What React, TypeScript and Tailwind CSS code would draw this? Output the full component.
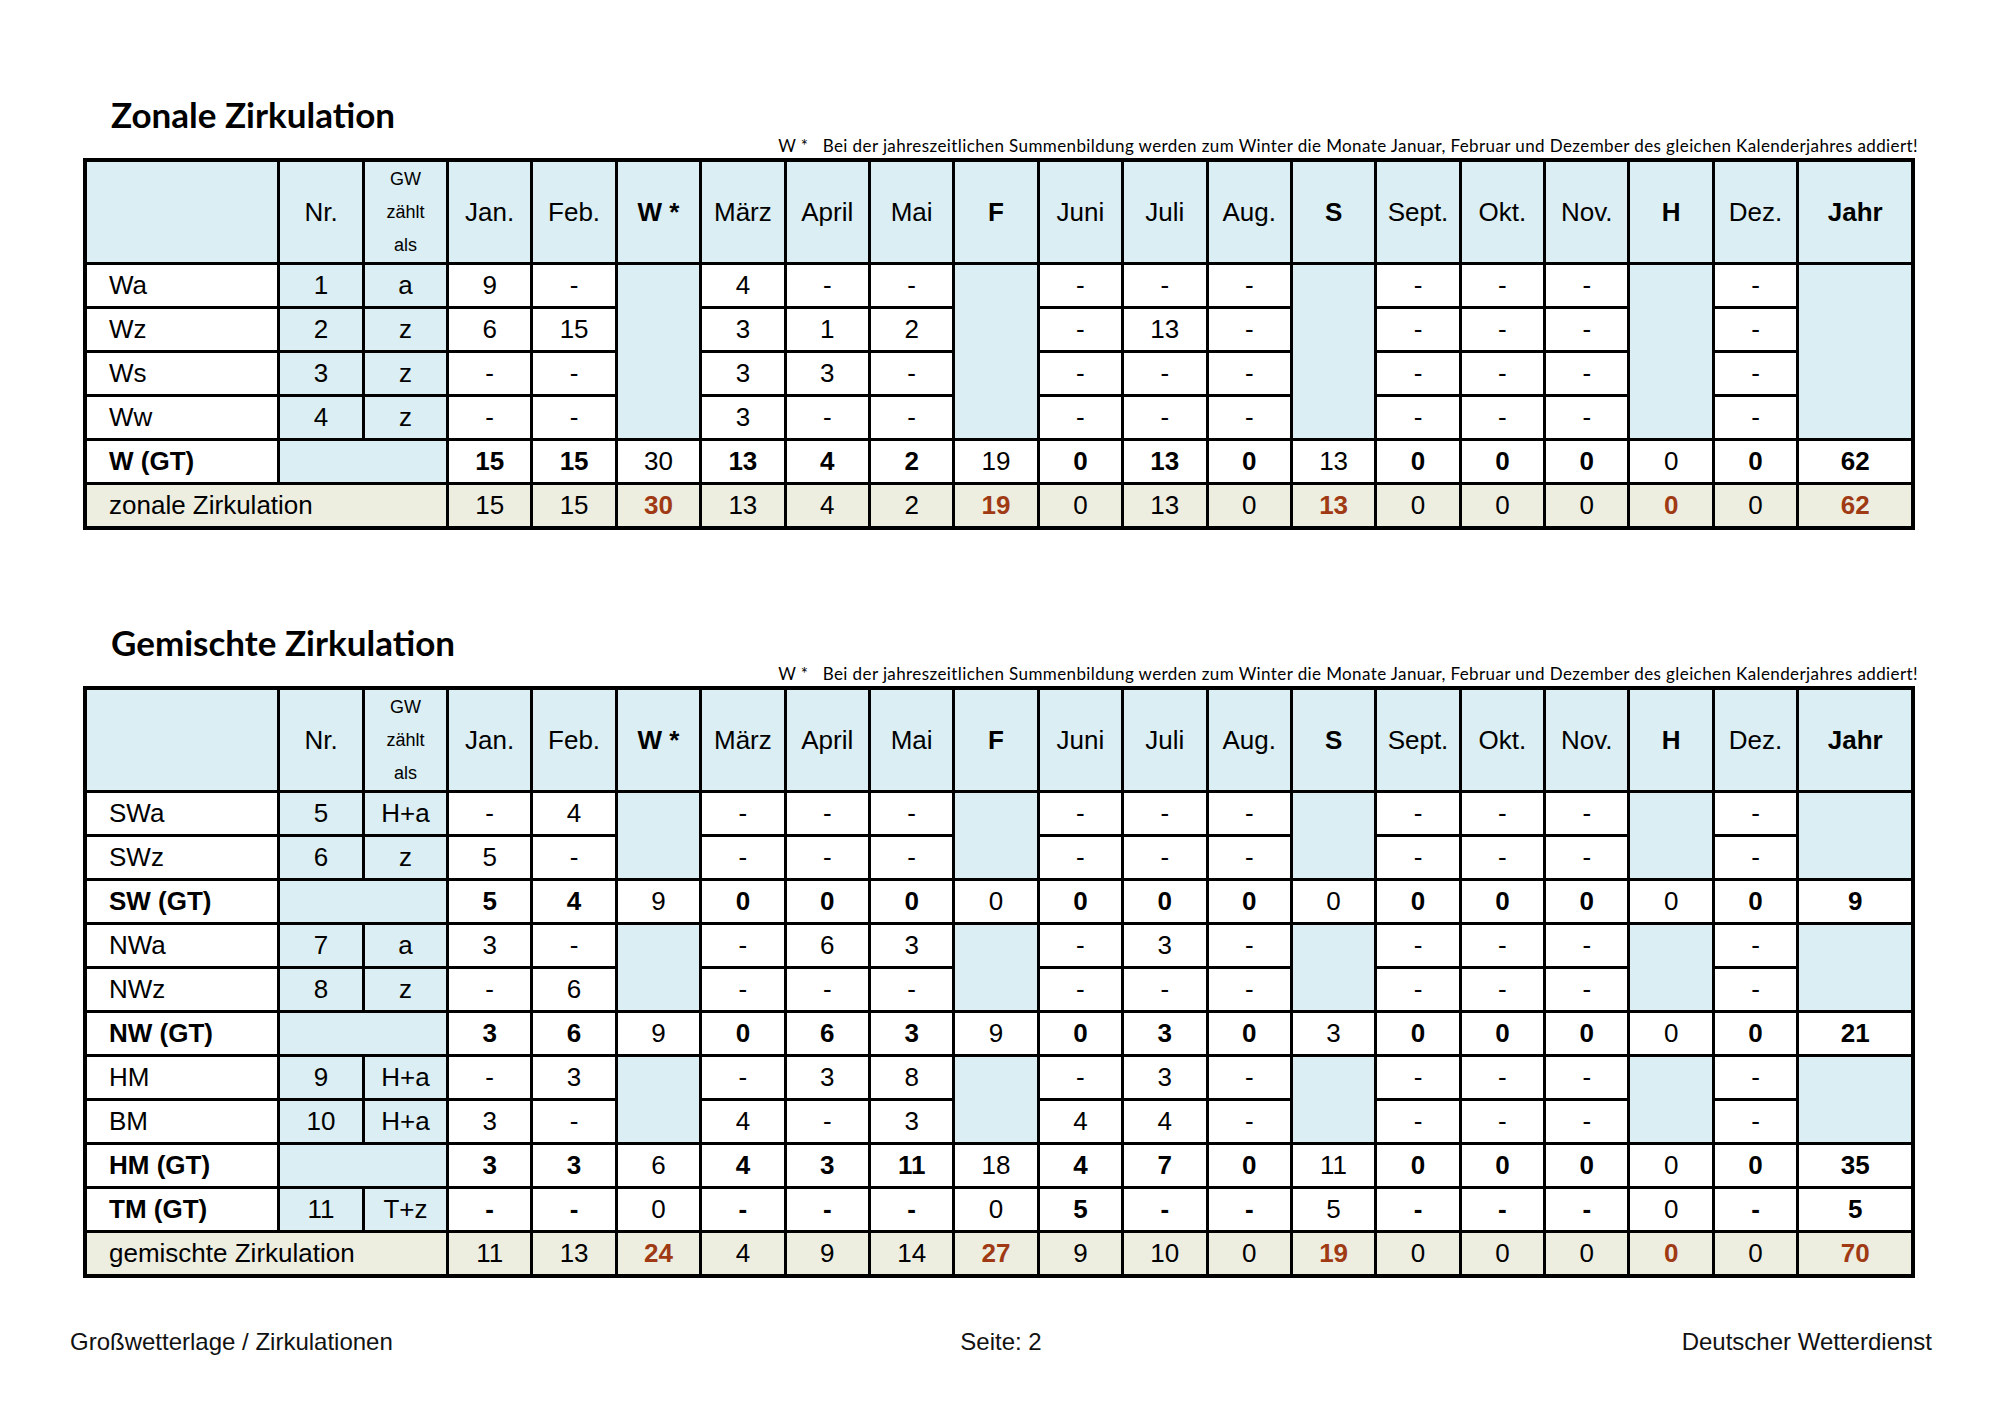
const COLS = ["Jan.", "Feb.", "W *", "März", "April", "Mai", "F", "Juni", "Juli", "Aug.", "S", "Sept.", "Okt.", "Nov.", "H", "Dez.", "Jahr"];
const SEASON = new Set([2, 6, 10, 14, 16]);

type Row =
  | { kind: "type"; label: string; nr: string; gw: string; months: string[]; span?: number }
  | { kind: "sum"; label: string; vals: string[]; nr?: string; gw?: string }
  | { kind: "total"; label: string; vals: string[] };

const ZONAL: Row[] = [
  { kind: "type", label: "Wa", nr: "1", gw: "a", span: 4, months: ["9", "-", "4", "-", "-", "-", "-", "-", "-", "-", "-", "-"] },
  { kind: "type", label: "Wz", nr: "2", gw: "z", months: ["6", "15", "3", "1", "2", "-", "13", "-", "-", "-", "-", "-"] },
  { kind: "type", label: "Ws", nr: "3", gw: "z", months: ["-", "-", "3", "3", "-", "-", "-", "-", "-", "-", "-", "-"] },
  { kind: "type", label: "Ww", nr: "4", gw: "z", months: ["-", "-", "3", "-", "-", "-", "-", "-", "-", "-", "-", "-"] },
  { kind: "sum", label: "W (GT)", vals: ["15", "15", "30", "13", "4", "2", "19", "0", "13", "0", "13", "0", "0", "0", "0", "0", "62"] },
  { kind: "total", label: "zonale Zirkulation", vals: ["15", "15", "30", "13", "4", "2", "19", "0", "13", "0", "13", "0", "0", "0", "0", "0", "62"] },
];

const MIXED: Row[] = [
  { kind: "type", label: "SWa", nr: "5", gw: "H+a", span: 2, months: ["-", "4", "-", "-", "-", "-", "-", "-", "-", "-", "-", "-"] },
  { kind: "type", label: "SWz", nr: "6", gw: "z", months: ["5", "-", "-", "-", "-", "-", "-", "-", "-", "-", "-", "-"] },
  { kind: "sum", label: "SW (GT)", vals: ["5", "4", "9", "0", "0", "0", "0", "0", "0", "0", "0", "0", "0", "0", "0", "0", "9"] },
  { kind: "type", label: "NWa", nr: "7", gw: "a", span: 2, months: ["3", "-", "-", "6", "3", "-", "3", "-", "-", "-", "-", "-"] },
  { kind: "type", label: "NWz", nr: "8", gw: "z", months: ["-", "6", "-", "-", "-", "-", "-", "-", "-", "-", "-", "-"] },
  { kind: "sum", label: "NW (GT)", vals: ["3", "6", "9", "0", "6", "3", "9", "0", "3", "0", "3", "0", "0", "0", "0", "0", "21"] },
  { kind: "type", label: "HM", nr: "9", gw: "H+a", span: 2, months: ["-", "3", "-", "3", "8", "-", "3", "-", "-", "-", "-", "-"] },
  { kind: "type", label: "BM", nr: "10", gw: "H+a", months: ["3", "-", "4", "-", "3", "4", "4", "-", "-", "-", "-", "-"] },
  { kind: "sum", label: "HM (GT)", vals: ["3", "3", "6", "4", "3", "11", "18", "4", "7", "0", "11", "0", "0", "0", "0", "0", "35"] },
  { kind: "sum", label: "TM (GT)", nr: "11", gw: "T+z", vals: ["-", "-", "0", "-", "-", "-", "0", "5", "-", "-", "5", "-", "-", "-", "0", "-", "5"] },
  { kind: "total", label: "gemischte Zirkulation", vals: ["11", "13", "24", "4", "9", "14", "27", "9", "10", "0", "19", "0", "0", "0", "0", "0", "70"] },
];

const BLUE = "bg-[#daeef3]";
const BEIGE = "bg-[#edeee0]";

function Cell({ children, className = "" }: { children?: React.ReactNode; className?: string }) {
  return <div className={`flex items-center justify-center ${className}`}>{children}</div>;
}

function TableRow({ row }: { row: Row }) {
  if (row.kind === "type") {
    let m = 0;
    return (
      <>
        <Cell className="justify-start bg-white pl-[22px]">{row.label}</Cell>
        <Cell className={BLUE}>{row.nr}</Cell>
        <Cell className={BLUE}>{row.gw}</Cell>
        {COLS.map((_, i) => {
          if (SEASON.has(i)) {
            // seasonal sums are one merged blue block per group
            if (!row.span) return null;
            return <div key={i} className={`${BLUE} ${row.span === 4 ? "row-span-4" : "row-span-2"}`} />;
          }
          const v = row.months[m++];
          return <Cell key={i} className="bg-white">{v}</Cell>;
        })}
      </>
    );
  }
  if (row.kind === "sum") {
    return (
      <>
        <Cell className="justify-start bg-white pl-[22px] font-bold">{row.label}</Cell>
        {row.nr ? (
          <>
            <Cell className={BLUE}>{row.nr}</Cell>
            <Cell className={BLUE}>{row.gw}</Cell>
          </>
        ) : (
          <div className={`${BLUE} col-span-2`} />
        )}
        {row.vals.map((v, i) => (
          <Cell key={i} className={`bg-white ${SEASON.has(i) && i !== 16 ? "" : "font-bold"}`}>{v}</Cell>
        ))}
      </>
    );
  }
  return (
    <>
      <Cell className={`col-span-3 justify-start pl-[22px] ${BEIGE}`}>{row.label}</Cell>
      {row.vals.map((v, i) => (
        <Cell key={i} className={`${BEIGE} ${SEASON.has(i) ? "font-bold text-[#9f3a14]" : ""}`}>{v}</Cell>
      ))}
    </>
  );
}

function Section({ title, rows, rowsClass }: { title: string; rows: Row[]; rowsClass: string }) {
  return (
    <section className="w-[1832px]">
      <h2 className="pl-[28px] font-['Lato',sans-serif] text-[35px] font-bold leading-[40px] text-black">{title}</h2>
      <p className="mt-[2px] -mr-[3px] text-right font-['Lato',sans-serif] text-[17px] leading-[20px] tracking-[0.4px] text-black">
        W *&nbsp;&nbsp; Bei der jahreszeitlichen Summenbildung werden zum Winter die Monate Januar, Februar und Dezember des gleichen Kalenderjahres addiert!
      </p>
      <div
        className={`mt-[2px] grid grid-cols-[190px_82px_81px_repeat(16,81.4px)_112px] gap-[3px] border-4 border-black bg-black font-['Liberation_Sans',Arial,sans-serif] text-[26px] text-black ${rowsClass}`}
      >
        <div className={BLUE} />
        <Cell className={BLUE}>Nr.</Cell>
        <div className={`${BLUE} flex flex-col items-center justify-center text-[18px] leading-[33px]`}>
          <span>GW</span>
          <span>zählt</span>
          <span>als</span>
        </div>
        {COLS.map((c, i) => (
          <Cell key={c} className={`${BLUE} ${SEASON.has(i) ? "font-bold" : ""}`}>{c}</Cell>
        ))}
        {rows.map((r, i) => (
          <TableRow key={i} row={r} />
        ))}
      </div>
    </section>
  );
}

export default function App() {
  return (
    <div className="flex h-[1413px] w-[2000px] flex-col bg-white">
      <div className="pl-[83px] pt-[94px]">
        <Section title="Zonale Zirkulation" rows={ZONAL} rowsClass="grid-rows-[100px_repeat(6,41px)]" />
        <div className="mt-[92px]">
          <Section title="Gemischte Zirkulation" rows={MIXED} rowsClass="grid-rows-[100px_repeat(11,41px)]" />
        </div>
      </div>
      <footer className="mt-[52px] grid grid-cols-3 pl-[70px] pr-[68px] font-['Liberation_Sans',Arial,sans-serif] text-[24px] leading-none text-[#111]">
        <span>Großwetterlage / Zirkulationen</span>
        <span className="text-center">Seite: 2</span>
        <span className="text-right">Deutscher Wetterdienst</span>
      </footer>
    </div>
  );
}
